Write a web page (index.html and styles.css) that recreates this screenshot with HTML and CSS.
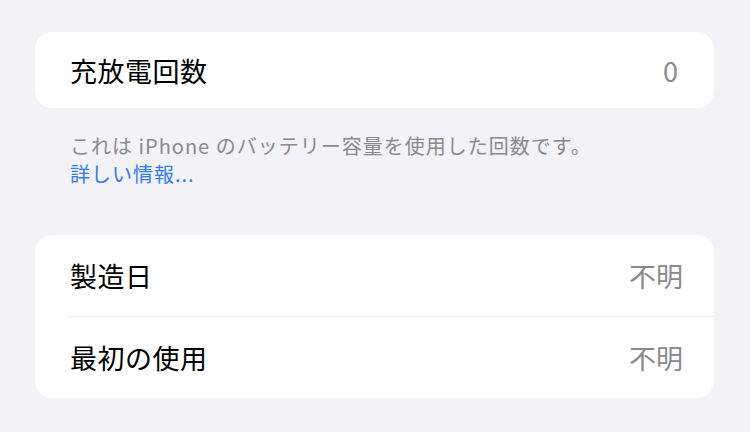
FILE: index.html
```html
<!DOCTYPE html>
<html lang="ja">
<head>
<meta charset="utf-8">
<link rel="stylesheet" href="styles.css">
</head>
<body>
<div class="page">
  <div class="card">
    <div class="row row-single">
      <span class="label">充放電回数</span>
      <span class="value">0</span>
    </div>
  </div>
  <div class="footer">
    <div>これは iPhone のバッテリー容量を使用した回数です。</div>
    <div class="link">詳しい情報...</div>
  </div>
  <div class="card">
    <div class="row row-wide">
      <span class="label">製造日</span>
      <span class="value">不明</span>
    </div>
    <div class="divider"></div>
    <div class="row row-wide">
      <span class="label">最初の使用</span>
      <span class="value">不明</span>
    </div>
  </div>
</div>
</body>
</html>
```
FILE: styles.css
```css
html, body {
  margin: 0;
  padding: 0;
  background: #f2f2f7;
}
body {
  font-family: "Noto Sans CJK JP", "Noto Sans", sans-serif;
  width: 750px;
  height: 432px;
  overflow: hidden;
}
.page {
  padding: 32px 36px 0 35px;
  display: flex;
  flex-direction: column;
}
.card {
  background: #ffffff;
  border-radius: 17px;
  display: flex;
  flex-direction: column;
}
.row {
  height: 81px;
  display: flex;
  align-items: center;
  justify-content: space-between;
  padding: 0 36px 0 35px;
}
.row-single {
  height: 76px;
}
.row-wide {
  padding-right: 31px;
}
.label {
  font-size: 27px;
  letter-spacing: 0.5px;
  color: #000000;
}
.value {
  font-size: 27px;
  color: #8a8a8e;
}
.divider {
  height: 1px;
  background: #efeff3;
  margin-left: 33px;
}
.footer {
  padding: 24px 35px 0 35px;
  font-size: 20px;
  letter-spacing: 1px;
  line-height: 28px;
  color: #8a8a8e;
  height: 127px;
  box-sizing: border-box;
}
.link {
  color: #2f7cf6;
}
```
